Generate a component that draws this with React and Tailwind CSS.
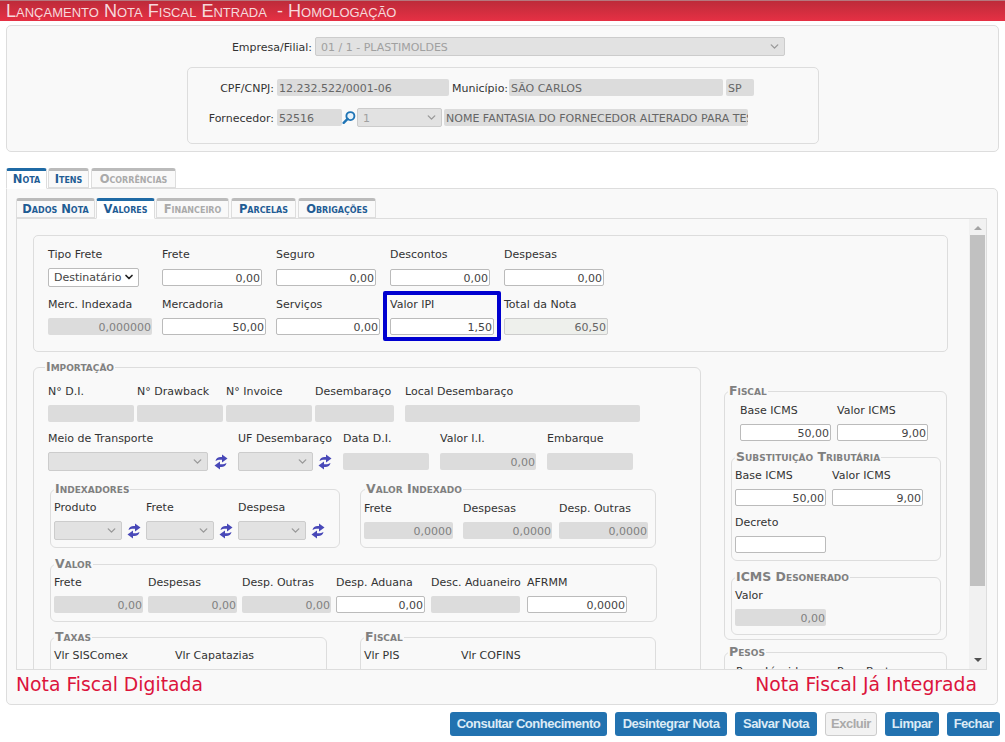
import React from 'react';
import { ChevronDown } from 'lucide-react';

const label = 'h-[14px] text-[11px] leading-[16px] text-[#333] whitespace-nowrap';

function Field({ w = 'w-full', value = '', off, left, total, className = '' }) {
  const tone = total
    ? 'bg-[#eef0ec] text-[#666] border border-[#ccc]'
    : off
      ? `bg-[#dcdcdc] ${left ? 'text-[#666]' : 'text-[#808080]'}`
      : 'bg-white text-[#444] border border-[#bbb]';
  return (
    <input
      readOnly
      value={value}
      className={`h-[17px] shrink-0 rounded-[2px] pt-[1px] text-[11px] outline-none ${left ? 'pl-[2px] text-left' : 'pr-[1px] text-right'} ${tone} ${w} ${className}`}
    />
  );
}

function Pick({ w, value }) {
  return (
    <div className={`relative h-[19px] shrink-0 rounded-[2px] border border-[#ccc] bg-[#e2e2e2] pl-[5px] text-[11px] leading-[19px] text-[#a0a0a0] ${w}`}>
      {value}
      <ChevronDown size={13} strokeWidth={2.5} className="absolute right-[3px] top-[2px] text-[#999]" />
    </div>
  );
}

function Cell({ name, w, value, off, total, wide, className = '' }) {
  return (
    <div className={`flex flex-col ${wide ? 'gap-[8px]' : 'gap-[7px]'} ${w} ${className}`}>
      <span className={label}>{name}</span>
      <Field value={value} off={off} total={total} />
    </div>
  );
}

function Sync() {
  return (
    <svg width="14" height="16" viewBox="0 0 14 16" className="shrink-0">
      <path d="M1.5 7C2 3.8 4.6 2.6 8 3V0.5L13.5 4.5L8 8.5V5.8C5.5 5.5 3.5 5.8 1.5 7Z" fill="#4848b8" />
      <path d="M12.5 9C12 12.2 9.4 13.4 6 13V15.5L0.5 11.5L6 7.5V10.2C8.5 10.5 10.5 10.2 12.5 9Z" fill="#4848b8" />
    </svg>
  );
}

function Box({ title, legend = '', className = '', children }) {
  return (
    <fieldset className={`rounded-[6px] border border-[#ddd] ${className}`}>
      <legend className={`px-[1px] text-[12.5px] leading-[14px] font-bold text-[#808080] [font-variant:small-caps] ${legend}`}>{title}</legend>
      {children}
    </fieldset>
  );
}

function Tab({ active, muted, children, className = '' }) {
  return (
    <div className={`rounded-t-[3px] border border-[#ddd] border-t-[3px] text-center text-[11.5px] leading-[16px] font-bold [font-variant:small-caps] whitespace-nowrap ${active ? 'border-t-[#1f6aa5] border-b-white bg-white -mb-px h-[21px] text-[#1f5c94]' : 'border-t-[#bbb] bg-[#f9f9f9] h-[20px]'} ${muted ? 'text-[#aaa]' : active ? '' : 'text-[#1f5c94]'} ${className}`}>
      {children}
    </div>
  );
}

function Btn({ w, off, children }) {
  return (
    <button className={`h-[24px] whitespace-nowrap rounded-[3px] text-[13px] font-bold tracking-[-0.5px] [font-family:'Liberation_Sans',sans-serif] ${off ? 'bg-[#f2f2f2] border border-[#ccc] text-[#aaa]' : 'bg-[#2272b0] text-[#dcebf6]'} ${w}`}>
      {children}
    </button>
  );
}

export default function App() {
  return (
    <div className="h-[742px] w-[1005px] overflow-hidden bg-white [font-family:'DejaVu_Sans','Liberation_Sans',sans-serif]">
      <div className="h-[21px] border-t border-[#b5787e] bg-gradient-to-b from-[#bd2b3a] to-[#e63044] pl-[6px] text-[18.1px] leading-[20px] text-[#f6d9dc] [font-family:'Liberation_Sans',sans-serif] [font-variant:small-caps] whitespace-pre">
        Lançamento Nota Fiscal Entrada  - Homologação
      </div>

      <div className="mx-[6px] mt-[4px] h-[127px] rounded-[5px] border border-[#ddd] bg-[#f9f9f9] pt-[11px]">
        <div className="flex items-center">
          <span className={`${label} w-[305px] text-right`}>Empresa/Filial:</span>
          <div className="ml-[3px]"><Pick w="w-[470px]" value="01 / 1 - PLASTIMOLDES" /></div>
        </div>
        <div className="ml-[180px] mt-[11px] h-[77px] w-[632px] rounded-[5px] border border-[#ddd] pt-[11px]">
          <div className="flex items-center">
            <span className={`${label} w-[86px] text-right`}>CPF/CNPJ:</span>
            <Field w="w-[172px]" off left value="12.232.522/0001-06" className="ml-[3px]" />
            <span className={`${label} ml-[3px] w-[54px]`}>Município:</span>
            <Field w="w-[214px]" off left value="SÃO CARLOS" className="ml-[3px]" />
            <Field w="w-[28px]" off left value="SP" className="ml-[3px]" />
          </div>
          <div className="mt-[12px] flex items-center">
            <span className={`${label} w-[86px] text-right`}>Fornecedor:</span>
            <Field w="w-[65px]" off left value="52516" className="ml-[3px]" />
            <svg width="14" height="15" viewBox="0 0 15 15" className="shrink-0">
              <circle cx="9" cy="6" r="4.3" fill="#e8f3fb" stroke="#1f74b5" strokeWidth="2" />
              <path d="M6 9L1.8 13.2" stroke="#1f74b5" strokeWidth="2.6" strokeLinecap="round" />
            </svg>
            <div className="ml-[1px]"><Pick w="w-[85px]" value="1" /></div>
            <Field w="w-[304px]" off left value="NOME FANTASIA DO FORNECEDOR ALTERADO PARA TESTE" className="ml-[2px]" />
          </div>
        </div>
      </div>

      <div className="mx-[6px] mt-[16px] flex h-[20px] items-start gap-[1px]">
        <Tab active className="w-[41px]">Nota</Tab>
        <Tab className="w-[41px]">Itens</Tab>
        <Tab muted className="ml-[1px] w-[85px]">Ocorrências</Tab>
      </div>

      <div className="ml-[6px] h-[517px] w-[992px] rounded-[5px] rounded-tl-none border border-[#ddd] bg-[#f9f9f9] px-[9px] pt-[9px]">
        <div className="flex h-[20px] items-start gap-[1px]">
          <Tab className="w-[79px]">Dados Nota</Tab>
          <Tab active className="w-[59px]">Valores</Tab>
          <Tab muted className="w-[73px]">Financeiro</Tab>
          <Tab className="ml-[1px] w-[65px]">Parcelas</Tab>
          <Tab className="ml-[1px] w-[78px]">Obrigações</Tab>
        </div>

        <div className="flex h-[452px] w-[971px] overflow-hidden border border-[#ddd]">
          <div className="h-full w-[952px] overflow-hidden pl-[16px] pt-[16px]">
            <div className="relative h-[117px] w-[915px] rounded-[5px] border border-[#ddd] pl-[14px] pt-[11px]">
              <div className="flex">
                <div className="flex w-[114px] flex-col gap-[8px]">
                  <span className={label}>Tipo Frete</span>
                  <div className="relative -mt-[1px] h-[19px] w-[91px] rounded-[2px] border border-[#bbb] bg-white pl-[5px] text-[11px] leading-[18px] text-[#444]">
                    Destinatário
                    <ChevronDown size={12} strokeWidth={3.5} className="absolute right-[3px] top-[2px] text-[#222]" />
                  </div>
                </div>
                <Cell wide name="Frete" w="w-[100px]" value="0,00" className="mr-[14px]" />
                <Cell wide name="Seguro" w="w-[100px]" value="0,00" className="mr-[14px]" />
                <Cell wide name="Descontos" w="w-[100px]" value="0,00" className="mr-[14px]" />
                <Cell wide name="Despesas" w="w-[100px]" value="0,00" />
              </div>
              <div className="mt-[10px] flex">
                <Cell name="Merc. Indexada" w="w-[104px]" off value="0,000000" className="mr-[10px]" />
                <Cell name="Mercadoria" w="w-[104px]" value="50,00" className="mr-[10px]" />
                <Cell name="Serviços" w="w-[104px]" value="0,00" className="mr-[10px]" />
                <Cell name="Valor IPI" w="w-[104px]" value="1,50" className="mr-[10px]" />
                <Cell name="Total da Nota" w="w-[104px]" value="60,50" total />
              </div>
              <div className="absolute left-[349px] top-[55px] h-[50px] w-[118px] rounded-[2px] border-[4px] border-[#0000d0]" />
            </div>

            <div className="mt-[8px] flex items-start">
              <Box title="Importação" legend="-ml-[3px]" className="h-[400px] w-[668px] shrink-0 pl-[14px] pt-[10px]">
                <div className="flex">
                  <Cell name="N° D.I." w="w-[86px]" off className="mr-[3px]" />
                  <Cell name="N° Drawback" w="w-[86px]" off className="mr-[3px]" />
                  <Cell name="N° Invoice" w="w-[86px]" off className="mr-[3px]" />
                  <Cell name="Desembaraço" w="w-[79px]" off className="mr-[11px]" />
                  <Cell name="Local Desembaraço" w="w-[235px]" off />
                </div>
                <div className="mt-[9px] flex">
                  <div className="flex w-[190px] flex-col gap-[7px]">
                    <span className={label}>Meio de Transporte</span>
                    <div className="flex items-center gap-[6px]"><Pick w="w-[160px]" /><Sync /></div>
                  </div>
                  <div className="flex w-[105px] flex-col gap-[7px]">
                    <span className={label}>UF Desembaraço</span>
                    <div className="flex items-center gap-[5px]"><Pick w="w-[75px]" /><Sync /></div>
                  </div>
                  <Cell wide name="Data D.I." w="w-[86px]" off className="mr-[11px]" />
                  <Cell wide name="Valor I.I." w="w-[96px]" value="0,00" off className="mr-[11px]" />
                  <Cell wide name="Embarque" w="w-[86px]" off />
                </div>

                <div className="mt-[11px] flex">
                  <Box title="Indexadores" className="ml-[2px] h-[66px] w-[290px] pl-[3px] pt-[4px]">
                    <div className="flex">
                      {['Produto', 'Frete', 'Despesa'].map(n => (
                        <div key={n} className="flex w-[92px] flex-col gap-[7px]">
                          <span className={label}>{n}</span>
                          <div className="flex items-center gap-[5px]"><Pick w="w-[68px]" /><Sync /></div>
                        </div>
                      ))}
                    </div>
                  </Box>
                  <Box title="Valor Indexado" legend="ml-[1px]" className="ml-[20px] h-[66px] w-[296px] pl-[3px] pt-[5px]">
                    <div className="flex">
                      <Cell name="Frete" w="w-[89px]" off value="0,0000" className="mr-[10px]" />
                      <Cell name="Despesas" w="w-[89px]" off value="0,0000" className="mr-[7px]" />
                      <Cell name="Desp. Outras" w="w-[89px]" off value="0,0000" />
                    </div>
                  </Box>
                </div>

                <Box title="Valor" className="ml-[2px] mt-[9px] h-[65px] w-[607px] pl-[3px] pt-[4px]">
                  <div className="flex">
                    <Cell name="Frete" w="w-[89px]" off value="0,00" className="mr-[5px]" />
                    <Cell name="Despesas" w="w-[89px]" off value="0,00" className="mr-[5px]" />
                    <Cell name="Desp. Outras" w="w-[89px]" off value="0,00" className="mr-[5px]" />
                    <Cell name="Desp. Aduana" w="w-[89px]" value="0,00" className="mr-[6px]" />
                    <Cell name="Desc. Aduaneiro" w="w-[89px]" off className="mr-[7px]" />
                    <Cell name="AFRMM" w="w-[100px]" value="0,0000" />
                  </div>
                </Box>

                <div className="mt-[8px] flex">
                  <Box title="Taxas" className="ml-[2px] h-[80px] w-[277px] pl-[3px] pt-[4px]">
                    <div className="flex">
                      <span className={`${label} w-[121px]`}>Vlr SISComex</span>
                      <span className={label}>Vlr Capatazias</span>
                    </div>
                  </Box>
                  <Box title="Fiscal" className="ml-[33px] h-[80px] w-[296px] pl-[3px] pt-[4px]">
                    <div className="flex">
                      <span className={`${label} w-[97px]`}>Vlr PIS</span>
                      <span className={label}>Vlr COFINS</span>
                    </div>
                  </Box>
                </div>
              </Box>

              <div className="ml-[23px] mt-[24px] w-[223px] shrink-0">
                <Box title="Fiscal" legend="-ml-[12px]" className="h-[256px] pl-[15px] pt-[5px]">
                  <div className="flex gap-[6px]">
                    <Cell name="Base ICMS" w="w-[91px]" value="50,00" />
                    <Cell name="Valor ICMS" w="w-[91px]" value="9,00" />
                  </div>
                  <Box title="Substituição Tributária" className="-ml-[9px] mt-[9px] h-[111px] w-[210px] pl-[3px] pt-[4px]">
                    <div className="flex gap-[6px]">
                      <Cell name="Base ICMS" w="w-[91px]" value="50,00" />
                      <Cell name="Valor ICMS" w="w-[91px]" value="9,00" />
                    </div>
                    <Cell name="Decreto" w="w-[91px]" className="mt-[9px]" />
                  </Box>
                  <Box title="ICMS Desonerado" className="-ml-[9px] mt-[9px] h-[65px] w-[210px] pl-[3px] pt-[4px]">
                    <Cell name="Valor" w="w-[91px]" off value="0,00" />
                  </Box>
                </Box>
                <Box title="Pesos" legend="-ml-[8px]" className="mt-[5px] h-[60px] pl-[11px] pt-[5px]">
                  <div className="flex">
                    <span className={`${label} w-[101px]`}>Peso Líquido</span>
                    <span className={label}>Peso Bruto</span>
                  </div>
                </Box>
              </div>
            </div>
          </div>

          <div className="flex w-[17px] shrink-0 flex-col items-center bg-[#f1f1f1]">
            <div className="mt-[7px] h-0 w-0 border-x-[4px] border-b-[4px] border-x-transparent border-b-[#a3a3a3]" />
            <div className="mt-[5px] h-[351px] w-[15px] bg-[#c1c1c1]" />
            <div className="mt-auto mb-[7px] h-0 w-0 border-x-[4px] border-t-[4px] border-x-transparent border-t-[#505050]" />
          </div>
        </div>

        <div className="flex items-center justify-between pr-[11px] pt-[3px] text-[18.8px] leading-[24px] text-[#dc143c]">
          <span>Nota Fiscal Digitada</span>
          <span>Nota Fiscal Já Integrada</span>
        </div>
      </div>

      <div className="mt-[7px] flex justify-end gap-[8px] pr-[5px]">
        <Btn w="w-[157px]">Consultar Conhecimento</Btn>
        <Btn w="w-[112px]">Desintegrar Nota</Btn>
        <Btn w="w-[82px]">Salvar Nota</Btn>
        <Btn w="w-[52px]" off>Excluir</Btn>
        <Btn w="w-[54px]">Limpar</Btn>
        <Btn w="w-[53px]">Fechar</Btn>
      </div>
    </div>
  );
}
